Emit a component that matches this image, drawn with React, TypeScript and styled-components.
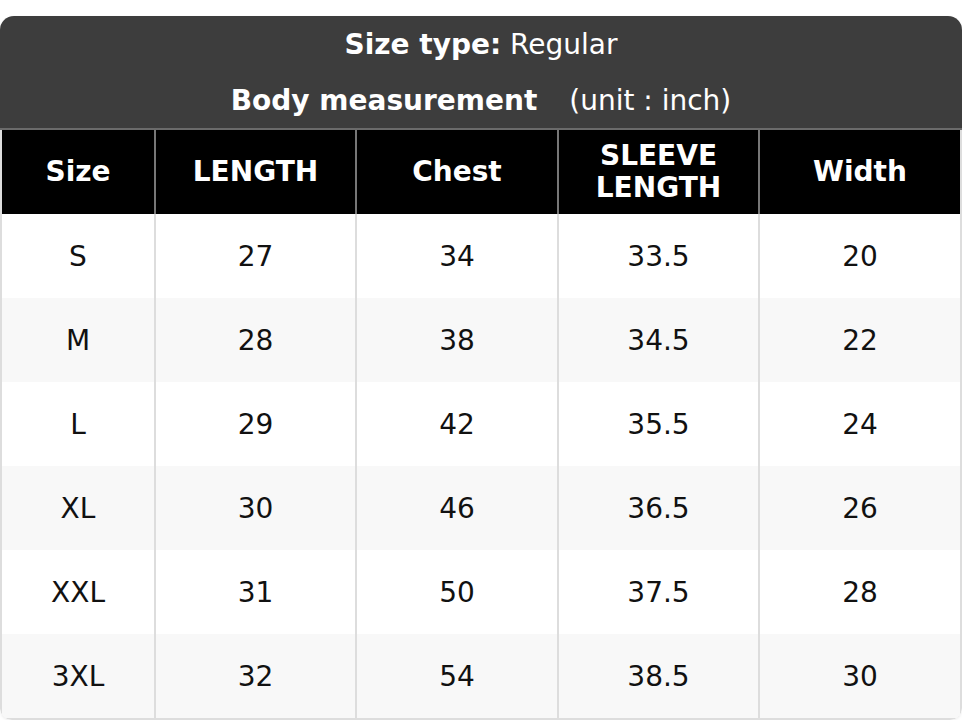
import React from "react";
import styled, { createGlobalStyle } from "styled-components";

const GlobalStyle = createGlobalStyle`
  html, body {
    margin: 0;
    padding: 0;
    background: #ffffff;
  }
  body {
    font-family: "DejaVu Sans", "Liberation Sans", sans-serif;
  }
`;

const Card = styled.div`
  margin-top: 16px;
  width: 962px;
  border-radius: 14px 14px 12px 12px;
  overflow: hidden;
  box-shadow: 0 1px 3px rgba(0, 0, 0, 0.08);
`;

const Caption = styled.div`
  background: #3d3d3d;
  color: #ffffff;
  border-bottom: 2px solid #6b6b6b;
  display: flex;
  flex-direction: column;
  align-items: center;
`;

const CaptionLine = styled.div`
  height: 56px;
  display: flex;
  align-items: center;
  justify-content: center;
  font-size: 28px;
  white-space: pre;
`;

const Strong = styled.b`
  font-weight: 700;
`;

const Unit = styled.span`
  margin-left: 32px;
`;

const Grid = styled.div`
  display: grid;
  grid-template-columns: 154px 201px 202px 201px 200px;
  border: 2px solid #dddddd;
  border-top: none;
  border-radius: 0 0 12px 12px;
`;

const HeadCell = styled.div<{ $last?: boolean }>`
  height: 84px;
  background: #000000;
  color: #ffffff;
  font-weight: 700;
  font-size: 28px;
  line-height: 32px;
  display: flex;
  align-items: center;
  justify-content: center;
  text-align: center;
  border-right: ${(p) => (p.$last ? "none" : "2px solid #777777")};
`;

const Cell = styled.div<{ $last?: boolean; $alt?: boolean }>`
  height: 84px;
  background: ${(p) => (p.$alt ? "#f8f8f8" : "#ffffff")};
  color: #111111;
  font-size: 28px;
  display: flex;
  align-items: center;
  justify-content: center;
  border-right: ${(p) => (p.$last ? "none" : "2px solid #dddddd")};
`;

const headers = ["Size", "LENGTH", "Chest", "SLEEVE\nLENGTH", "Width"];

const rows = [
  ["S", "27", "34", "33.5", "20"],
  ["M", "28", "38", "34.5", "22"],
  ["L", "29", "42", "35.5", "24"],
  ["XL", "30", "46", "36.5", "26"],
  ["XXL", "31", "50", "37.5", "28"],
  ["3XL", "32", "54", "38.5", "30"],
];

export default function App() {
  return (
    <>
      <GlobalStyle />
      <Card>
        <Caption>
          <CaptionLine>
            <Strong>Size type:</Strong> Regular
          </CaptionLine>
          <CaptionLine>
            <Strong>Body measurement</Strong>
            <Unit>(unit : inch)</Unit>
          </CaptionLine>
        </Caption>
        <Grid>
          {headers.map((h, i) => (
            <HeadCell key={h} $last={i === headers.length - 1}>
              {h.split("\n").map((part, j) => (
                <React.Fragment key={j}>
                  {j > 0 && <br />}
                  {part}
                </React.Fragment>
              ))}
            </HeadCell>
          ))}
          {rows.map((row, r) =>
            row.map((v, c) => (
              <Cell key={`${r}-${c}`} $alt={r % 2 === 1} $last={c === row.length - 1}>
                {v}
              </Cell>
            ))
          )}
        </Grid>
      </Card>
    </>
  );
}
